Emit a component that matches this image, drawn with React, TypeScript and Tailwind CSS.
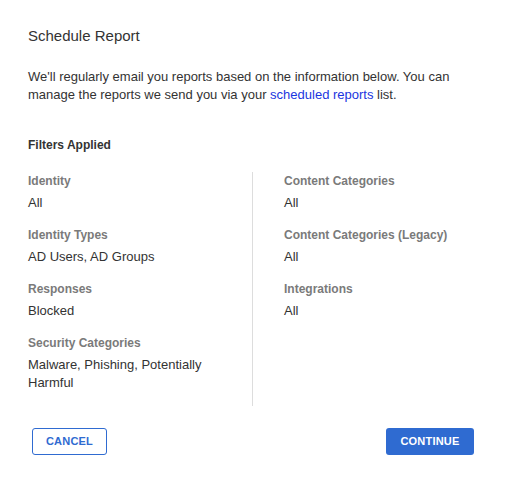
import React from "react";

const Field = ({ label, value }: { label: string; value: string }) => (
  <div className="flex flex-col gap-[6px]">
    <div className="text-[12px] leading-[14px] font-bold text-[#7a7a7a]">{label}</div>
    <div className="text-[13px] leading-[18px] text-[#333333]">{value}</div>
  </div>
);

export default function App() {
  return (
    <div
      className="w-[505px] h-[477px] bg-white flex flex-col pl-[28px] pr-[31px]"
      style={{ fontFamily: '"Liberation Sans", Arial, sans-serif' }}
    >
      <div className="mt-[26px] text-[15px] leading-[20px] text-[#333333]">Schedule Report</div>
      <div className="mt-[22px] text-[13px] leading-[18px] text-[#333333]">
        We'll regularly email you reports based on the information below. You can manage the reports we send you via your{" "}
        <span className="text-[#1a35e0]">scheduled reports</span> list.
      </div>
      <div className="mt-[34px] text-[12px] leading-[14px] font-bold text-[#333333]">Filters Applied</div>
      <div className="mt-[20px] flex">
        <div className="w-[225px] border-r border-[#dddddd] pt-[2px] pr-[40px] pb-[14px] flex flex-col gap-[16px]">
          <Field label="Identity" value="All" />
          <Field label="Identity Types" value="AD Users, AD Groups" />
          <Field label="Responses" value="Blocked" />
          <Field label="Security Categories" value="Malware, Phishing, Potentially Harmful" />
        </div>
        <div className="pl-[31px] pt-[2px] flex flex-col gap-[16px]">
          <Field label="Content Categories" value="All" />
          <Field label="Content Categories (Legacy)" value="All" />
          <Field label="Integrations" value="All" />
        </div>
      </div>
      <div className="mt-[22px] flex justify-between items-center">
        <button className="ml-[4px] w-[75px] h-[27px] rounded-[3px] border border-[#2f6bd1] bg-white text-[#2f6bd1] text-[11px] font-bold tracking-[0.2px]">
          CANCEL
        </button>
        <button className="w-[88px] h-[27px] rounded-[3px] bg-[#2f6bd1] text-white text-[11px] font-bold tracking-[0.2px]">
          CONTINUE
        </button>
      </div>
    </div>
  );
}
